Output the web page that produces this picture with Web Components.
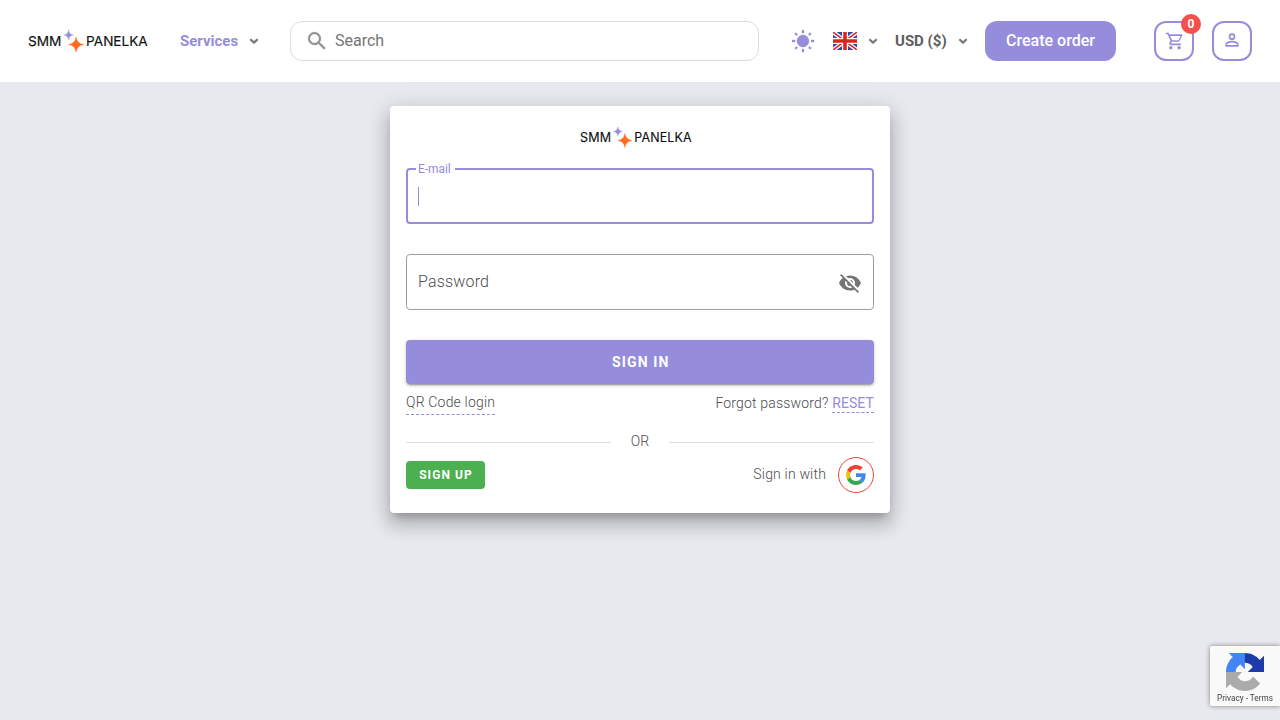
<!DOCTYPE html>
<html lang="en">
<head>
<meta charset="utf-8">
<title>SMM Panelka</title>
<style>
html,body{margin:0;height:100%;overflow:hidden}
body{font-family:Roboto,"Liberation Sans",sans-serif;background:#e8e9ee;color:#666;--primary:#958ddb}
</style>
</head>
<body>
<smm-app></smm-app>
<script>
const define = (name, html) => {
  const template = document.createElement('template');
  template.innerHTML = html;
  customElements.define(name, class extends HTMLElement {
    constructor() {
      super();
      this.attachShadow({mode: 'open'}).append(template.content.cloneNode(true));
    }
  });
};

const ICONS = {
  sun: 'M3.55 19.09L4.96 20.5L6.76 18.71L5.34 17.29M12 6C8.69 6 6 8.69 6 12S8.69 18 12 18 18 15.31 18 12C18 8.68 15.31 6 12 6M20 13H23V11H20M17.24 18.71L19.04 20.5L20.45 19.09L18.66 17.29M20.45 5L19.04 3.6L17.24 5.39L18.66 6.81M13 1H11V4H13M6.76 5.39L4.96 3.6L3.55 5L5.34 6.81L6.76 5.39M1 13H4V11H1M13 20H11V23H13',
  search: 'M9.5,3A6.5,6.5 0 0,1 16,9.5C16,11.11 15.41,12.59 14.44,13.73L14.71,14H15.5L20.5,19L19,20.5L14,15.5V14.71L13.73,14.44C12.59,15.41 11.11,16 9.5,16A6.5,6.5 0 0,1 3,9.5A6.5,6.5 0 0,1 9.5,3M9.5,5C7,5 5,7 5,9.5C5,12 7,14 9.5,14C12,14 14,12 14,9.5C14,7 12,5 9.5,5Z',
  cart: 'M17,18A2,2 0 0,1 19,20A2,2 0 0,1 17,22C15.89,22 15,21.1 15,20C15,18.89 15.89,18 17,18M1,2H4.27L5.21,4H20A1,1 0 0,1 21,5C21,5.17 20.95,5.34 20.88,5.5L17.3,11.97C16.96,12.58 16.3,13 15.55,13H8.1L7.2,14.63L7.17,14.75A0.25,0.25 0 0,0 7.42,15H19V17H7C5.89,17 5,16.1 5,15C5,14.65 5.09,14.32 5.24,14.04L6.6,11.59L3,4H1V2M7,18A2,2 0 0,1 9,20A2,2 0 0,1 7,22C5.89,22 5,21.1 5,20C5,18.89 5.89,18 7,18M16,11L18.78,6H6.14L8.5,11H16Z',
  account: 'M12,4A4,4 0 0,1 16,8A4,4 0 0,1 12,12A4,4 0 0,1 8,8A4,4 0 0,1 12,4M12,6A2,2 0 0,0 10,8A2,2 0 0,0 12,10A2,2 0 0,0 14,8A2,2 0 0,0 12,6M12,13C14.67,13 20,14.33 20,17V20H4V17C4,14.33 9.33,13 12,13M12,14.9C9.03,14.9 5.9,16.36 5.9,17V18.1H18.1V17C18.1,16.36 14.97,14.9 12,14.9Z',
  'eye-off': 'M11.83,9L15,12.16C15,12.11 15,12.05 15,12A3,3 0 0,0 12,9C11.94,9 11.89,9 11.83,9M7.53,9.8L9.08,11.35C9.03,11.56 9,11.77 9,12A3,3 0 0,0 12,15C12.22,15 12.44,14.97 12.65,14.92L14.2,16.47C13.53,16.8 12.79,17 12,17A5,5 0 0,1 7,12C7,11.21 7.2,10.47 7.53,9.8M2,4.27L4.28,6.55L4.73,7C3.08,8.3 1.78,10 1,12C2.73,16.39 7,19.5 12,19.5C13.55,19.5 15.03,19.2 16.38,18.66L16.81,19.08L19.73,22L21,20.73L3.27,3M12,7A5,5 0 0,1 17,12C17,12.64 16.87,13.26 16.64,13.82L19.57,16.75C21.07,15.5 22.27,13.86 23,12C21.27,7.61 17,4.5 12,4.5C10.6,4.5 9.26,4.75 8,5.2L10.17,7.35C10.74,7.13 11.35,7 12,7Z'
};
customElements.define('smm-icon', class extends HTMLElement {
  constructor() { super(); this.attachShadow({mode: 'open'}); }
  connectedCallback() {
    const size = this.getAttribute('size') || 24;
    this.shadowRoot.innerHTML = `<style>:host{display:block;flex:none;width:${size}px;height:${size}px}svg{display:block}path{stroke:currentColor;stroke-width:var(--bold,0)}</style>
      <svg width="${size}" height="${size}" viewBox="0 0 24 24" fill="currentColor"><path d="${ICONS[this.getAttribute('name')]}"/></svg>`;
  }
});

define('smm-chevron', `<style>:host{display:block;flex:none;width:10px;height:6px;color:#777}svg{display:block}</style>
<svg width="10" height="6" viewBox="0 0 10 6"><path d="M1.3 1.2L5 4.6L8.7 1.2" fill="none" stroke="currentColor" stroke-width="2.2"/></svg>`);

define('smm-logo', `<style>:host{display:block;flex:none;width:120px;height:24px}svg{display:block;width:100%;height:100%;overflow:visible}
text{font:400 13.6px Inter,sans-serif;fill:#111;stroke:#111;stroke-width:.15}</style>
<svg viewBox="0 0 120 24">
<text x="-.1" y="17.4" textLength="33.5" lengthAdjust="spacingAndGlyphs">SMM</text>
<text x="58.1" y="17.4" textLength="61.6" lengthAdjust="spacingAndGlyphs">PANELKA</text>
<path d="M40.6 .9Q41 5.4 45.4 6Q41 6.6 40.6 11.1Q40.2 6.6 35.8 6Q40.2 5.4 40.6 .9Z" fill="#958ddb" stroke="#958ddb" stroke-width=".3"/>
<path d="M48.1 8Q48.9 14.5 55.7 15.5Q48.9 16.5 48.1 23.2Q47.3 16.5 40.5 15.5Q47.3 14.5 48.1 8Z" fill="#ff6c1f" stroke="#ff6c1f" stroke-width=".4"/>
</svg>`);

define('smm-flag', `<style>:host{display:block;flex:none;width:24px;height:18px}svg{display:block}</style>
<svg width="24" height="18" viewBox="0 0 24 18"><path fill="#3c469e" d="M0 0H24V18H0Z"/>
<path d="M0 0L24 18M24 0L0 18" stroke="#fff" stroke-width="4.2"/>
<path d="M0 0L24 18M24 0L0 18" stroke="#e0231f" stroke-width="1.5"/>
<path d="M12 0V18M0 9H24" stroke="#fff" stroke-width="6"/>
<path d="M12 0V18M0 9H24" stroke="#e0231f" stroke-width="3.6"/></svg>`);

define('smm-box-button', `<style>:host{display:flex;box-sizing:border-box;flex:none;width:40px;height:40px;border:2px solid var(--primary);border-radius:12px;align-items:center;justify-content:center;color:var(--primary);position:relative}
::slotted(b){position:absolute;right:-9px;top:-9px;width:20px;height:20px;border-radius:50%;background:#f5504e;color:#fff;font:700 12px/20px Roboto,sans-serif;text-align:center}</style>
<slot></slot>`);

define('smm-header', `<style>
:host{display:flex;box-sizing:border-box;height:82px;padding:0 28px;background:#fff;align-items:center}
.services{margin-left:32px;color:var(--primary);font:700 15px/20px Roboto,sans-serif;width:69px}
.search{display:flex;box-sizing:border-box;align-items:center;width:469px;height:40px;border:1px solid #dcdcdc;border-radius:12px;margin-left:31px;padding:0 14px;gap:6px;font-size:16px;color:#757575}
.search span{margin-bottom:2px}
.search smm-icon{color:#919191;--bold:.25}
.sun{color:var(--primary);margin-left:32px;--bold:.35}
smm-flag{margin:0 11px 0 18px}
.usd{margin-left:17px;width:63px;font:700 15px/20px Roboto,sans-serif;color:#5e5e5e}
.order{margin-left:17px;width:131px;height:40px;border-radius:12px;background:var(--primary);color:#fff;text-align:center;font:500 16px/39px Roboto,sans-serif}
.cart{margin-left:38px}.user{margin-left:18px}
.cart smm-icon{margin-left:2px}
.user smm-icon{margin-bottom:2px}
</style>
<smm-logo></smm-logo><span class="services">Services</span><smm-chevron></smm-chevron>
<div class="search"><smm-icon name="search"></smm-icon><span>Search</span></div>
<smm-icon class="sun" name="sun"></smm-icon><smm-flag></smm-flag><smm-chevron></smm-chevron>
<span class="usd">USD ($)</span><smm-chevron></smm-chevron>
<div class="order">Create order</div>
<smm-box-button class="cart"><smm-icon name="cart" size="20"></smm-icon><b>0</b></smm-box-button>
<smm-box-button class="user"><smm-icon name="account" size="20"></smm-icon></smm-box-button>`);

define('smm-field', `<style>
:host{display:flex;box-sizing:border-box;height:56px;border:1px solid #9e9e9e;border-radius:4px;padding:0 11px;align-items:center;justify-content:space-between;position:relative;font-size:16px;font-weight:300;letter-spacing:.18px;color:#4c4c4c}
:host([focused]){border:2px solid var(--primary);padding:0 10px}
.float{display:none}
:host([focused]) .float{display:block;position:absolute;left:8px;top:-8px;padding:0 4px 0 2px;background:#fff;color:var(--primary);font:400 12px/14px Roboto,sans-serif;letter-spacing:-.05px}
::slotted(i){width:1px;height:19px;margin-top:2px;background:var(--primary)}
::slotted(smm-icon){color:#757575;margin-top:2px}
</style><span class="float"><slot name="label"></slot></span><slot></slot>`);

define('smm-google', `<style>:host{display:flex;box-sizing:border-box;width:36px;height:36px;border:1px solid #ea4335;border-radius:50%;align-items:center;justify-content:center}svg{display:block}</style>
<svg width="20" height="20" viewBox="0 0 48 48"><path fill="#EA4335" d="M24 9.5c3.54 0 6.71 1.22 9.21 3.6l6.85-6.85C35.9 2.38 30.47 0 24 0 14.62 0 6.51 5.38 2.56 13.22l7.98 6.19C12.43 13.72 17.74 9.5 24 9.5z"/><path fill="#4285F4" d="M46.98 24.55c0-1.57-.15-3.09-.38-4.55H24v9.02h12.94c-.58 2.96-2.26 5.48-4.78 7.18l7.73 6c4.51-4.18 7.09-10.36 7.09-17.65z"/><path fill="#FBBC05" d="M10.53 28.59c-.48-1.45-.76-2.99-.76-4.59s.27-3.14.76-4.59l-7.98-6.19C.92 16.46 0 20.12 0 24c0 3.88.92 7.54 2.56 10.78l7.97-6.19z"/><path fill="#34A853" d="M24 48c6.48 0 11.93-2.13 15.89-5.81l-7.73-6c-2.15 1.45-4.92 2.3-8.16 2.3-6.26 0-11.57-4.22-13.47-9.91l-7.98 6.19C6.51 42.62 14.62 48 24 48z"/></svg>`);

define('smm-login', `<style>
:host{display:block;box-sizing:border-box;width:500px;height:407px;margin:24px auto 0;padding:20px 16px 0;background:#fff;border-radius:4px;box-shadow:0 7px 8px -4px rgba(0,0,0,.2),0 12px 17px 2px rgba(0,0,0,.14),0 5px 22px 4px rgba(0,0,0,.12);font-size:14px;font-weight:300;line-height:20px;letter-spacing:.18px;color:#4c4c4c}
smm-logo{width:112px;height:22.4px;margin:0 auto 19.6px;transform:translateX(-4px)}
.pass{margin-top:30px}
.signin{margin-top:30px;height:44px;border-radius:4px;background:var(--primary);color:#fff;text-align:center;text-indent:1.5px;font:700 14px/44px Roboto,sans-serif;letter-spacing:1.15px;box-shadow:0 3px 1px -2px rgba(0,0,0,.2),0 2px 2px rgba(0,0,0,.14),0 1px 5px rgba(0,0,0,.12)}
.row{display:flex;justify-content:space-between;align-items:flex-start}
.links{margin-top:8px;height:39px}
.qr{border-bottom:1px dashed var(--primary);height:22px}
.forgot{padding-top:1px}
.reset{display:inline-block;color:var(--primary);border-bottom:1px dashed var(--primary);line-height:18px;font-weight:400;letter-spacing:.1px}
.or{display:flex;align-items:center;gap:20px;height:20px;letter-spacing:0}
.or::before,.or::after{content:"";flex:1;height:1px;background:#ddd;margin-top:3px}
.last{align-items:center;margin-top:6px}
.signup{background:#4caf50;color:#fff;border-radius:4px;width:79px;height:28px;font:700 12px/28px Roboto,sans-serif;letter-spacing:1.07px;text-align:center;text-indent:1px}
.with{display:flex;align-items:center;gap:12px}
.with span{margin-bottom:2px}
</style>
<smm-logo></smm-logo>
<smm-field focused><span slot="label">E-mail</span><i></i></smm-field>
<smm-field class="pass"><span>Password</span><smm-icon name="eye-off"></smm-icon></smm-field>
<div class="signin">SIGN IN</div>
<div class="row links"><span class="qr">QR Code login</span><span class="forgot">Forgot password? <span class="reset">RESET</span></span></div>
<div class="or"><span>OR</span></div>
<div class="row last"><div class="signup">SIGN UP</div><div class="with"><span>Sign in with</span><smm-google></smm-google></div></div>`);

define('smm-captcha', `<style>:host{position:fixed;right:0;bottom:14px;box-sizing:border-box;width:70px;height:60px;background:#f9f9f9;border-radius:2px 0 0 2px;box-shadow:0 0 5px gray;display:flex;flex-direction:column;align-items:center;padding-top:7px;font:400 8.2px/10px Roboto,sans-serif;color:#444}
svg{display:block}span{margin-top:2px;white-space:pre;letter-spacing:.02px}</style>
<svg width="38" height="38" viewBox="0 0 64 64"><path d="M64 31.955l-.033-1.37V4.687l-7.16 7.16C50.948 4.674 42.033.093 32.05.093c-10.4 0-19.622 4.96-25.458 12.64l11.736 11.86a15.55 15.55 0 0 1 4.754-5.334c2.05-1.6 4.952-2.906 8.968-2.906.485 0 .86.057 1.135.163 4.976.393 9.288 3.14 11.828 7.124l-8.307 8.307L64 31.953" fill="#1c3aa9"/><path d="M31.862.094l-1.37.033H4.594l7.16 7.16C4.58 13.147 0 22.06 0 32.046c0 10.4 4.96 19.622 12.64 25.458L24.5 45.768a15.55 15.55 0 0 1-5.334-4.754c-1.6-2.05-2.906-4.952-2.906-8.968 0-.485.057-.86.163-1.135.393-4.976 3.14-9.288 7.124-11.828l8.307 8.307L31.86.095" fill="#4285f4"/><path d="M.001 32.045l.033 1.37v25.898l7.16-7.16c5.86 7.173 14.774 11.754 24.76 11.754 10.4 0 19.622-4.96 25.458-12.64l-11.736-11.86a15.55 15.55 0 0 1-4.754 5.334c-2.05 1.6-4.952 2.906-8.968 2.906-.485 0-.86-.057-1.135-.163-4.976-.393-9.288-3.14-11.828-7.124l8.307-8.307c-10.522.04-22.4.066-27.295-.005" fill="#ababab"/></svg>
<span>Privacy - Terms</span>`);

define('smm-app', `<style>:host{display:block;height:100%}</style><smm-header></smm-header><smm-login></smm-login><smm-captcha></smm-captcha>`);
</script>
</body>
</html>
